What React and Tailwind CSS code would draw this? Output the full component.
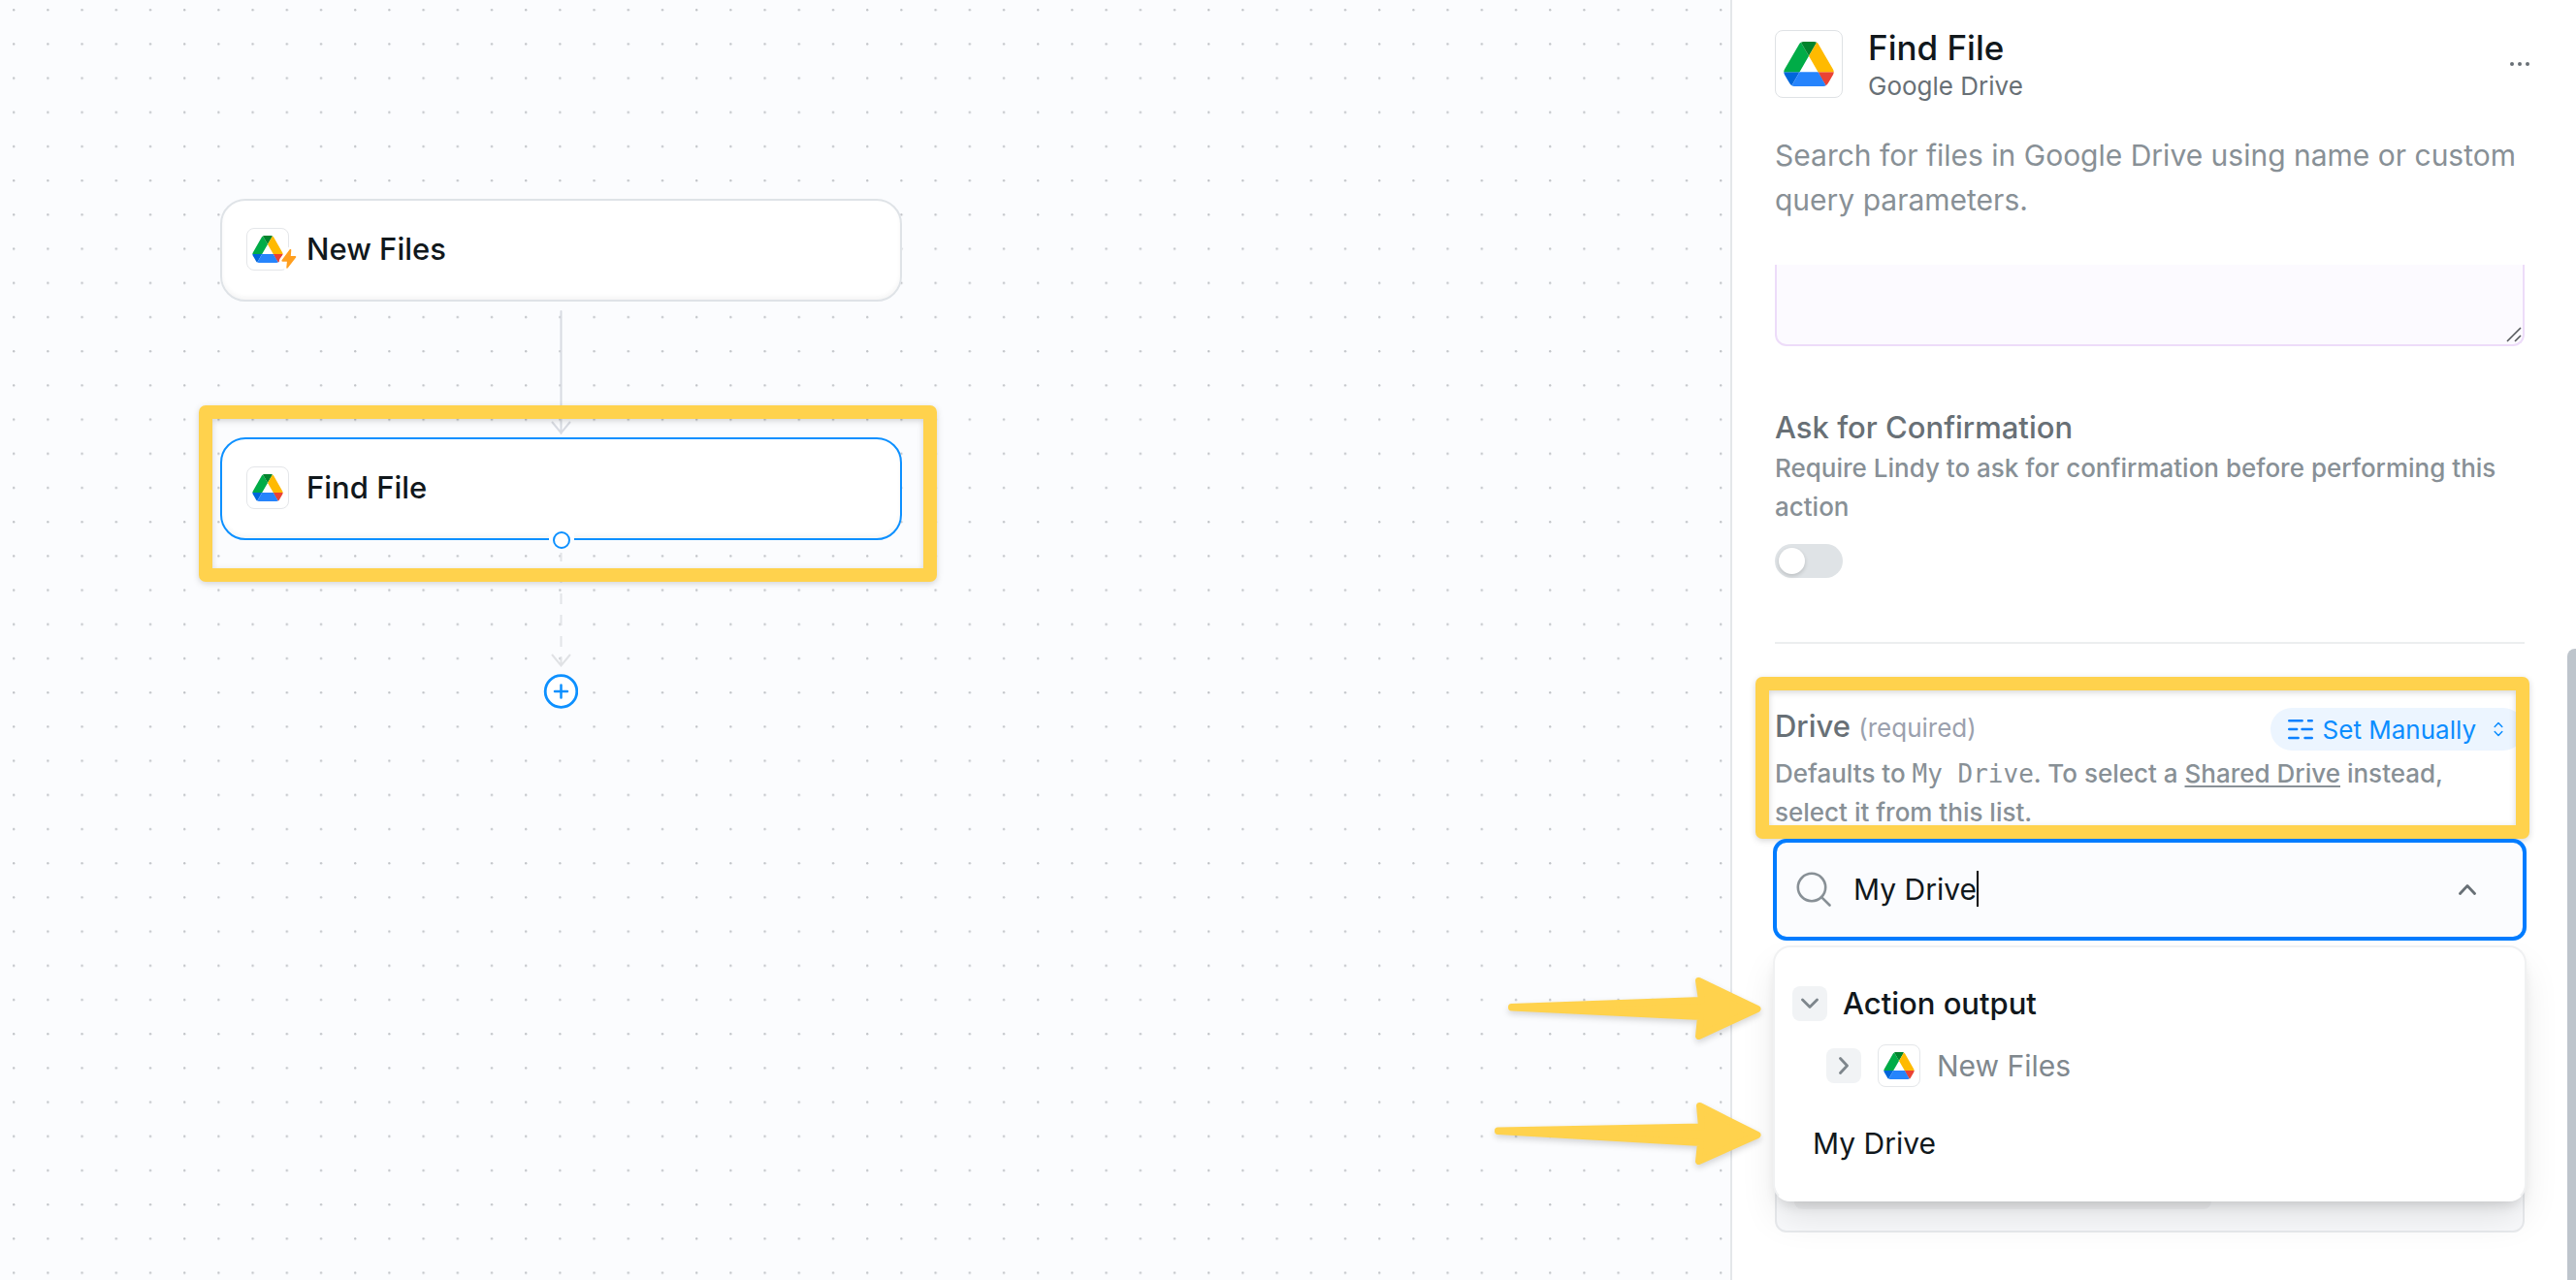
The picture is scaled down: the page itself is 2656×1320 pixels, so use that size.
import React from "react";

const ANNOTATION = "#ffd24d";

function DriveLogo({ className }) {
  return (
    <svg viewBox="0 0 87.3 78" className={className} aria-hidden="true">
      <path fill="#0066da" d="m6.6 66.85 3.85 6.65c.8 1.4 1.95 2.5 3.3 3.3l13.75-23.8h-27.5c0 1.55.4 3.1 1.2 4.5z" />
      <path fill="#00ac47" d="m43.65 25-13.75-23.8c-1.35.8-2.5 1.9-3.3 3.3l-25.4 44a9.06 9.06 0 0 0 -1.2 4.5h27.5z" />
      <path fill="#ea4335" d="m73.55 76.8c1.35-.8 2.5-1.9 3.3-3.3l1.6-2.75 7.65-13.25c.8-1.4 1.2-2.95 1.2-4.5h-27.502l5.852 11.5z" />
      <path fill="#00832d" d="m43.65 25 13.75-23.8c-1.35-.8-2.9-1.2-4.5-1.2h-18.5c-1.6 0-3.15.45-4.5 1.2z" />
      <path fill="#2684fc" d="m59.8 53h-32.3l-13.75 23.8c1.35.8 2.9 1.2 4.5 1.2h50.8c1.6 0 3.15-.45 4.5-1.2z" />
      <path fill="#ffba00" d="m73.4 26.5-12.7-22c-.8-1.4-1.95-2.5-3.3-3.3l-13.75 23.8 16.15 28h27.45c0-1.55-.4-3.1-1.2-4.5z" />
    </svg>
  );
}

function SmallDriveBadge({ children }) {
  return (
    <span className="relative flex size-11 shrink-0 items-center justify-center rounded-lg border border-[#e4e6e9] bg-white">
      <DriveLogo className="h-7 w-8" />
      {children}
    </span>
  );
}

function Bolt() {
  return (
    <svg viewBox="0 0 22 26" className="absolute -right-3 -bottom-0.5 h-[26px] w-[22px]" aria-hidden="true">
      <path
        d="M11.5 3.5 3.6 14.2c-.5.7-.1 1.5.7 1.5h4.6l-.6 6c-.1 1 .9 1.3 1.5.6l8.3-10.8c.5-.7.1-1.5-.7-1.5h-4.6l.5-6c.1-1-1.200-1.300-1.800-.5z"
        fill="#ff9f1f"
        stroke="#fff"
        strokeWidth="5"
        strokeLinejoin="round"
        paintOrder="stroke"
      />
    </svg>
  );
}

function DotGrid() {
  return (
    <svg className="absolute inset-0 size-full" aria-hidden="true">
      <defs>
        <pattern id="dots" x="13" y="9" width="35.2" height="35.2" patternUnits="userSpaceOnUse">
          <circle cx="1.2" cy="1.2" r="1.15" fill="#bfc2c6" />
        </pattern>
      </defs>
      <rect width="100%" height="100%" fill="url(#dots)" />
    </svg>
  );
}

function Canvas() {
  return (
    <main className="relative min-w-0 flex-1 bg-[#fbfcfe]">
      <DotGrid />

      <svg className="absolute top-[320px] left-[558px] h-[412px] w-[42px]" viewBox="0 0 42 412" fill="none" aria-hidden="true">
        <path d="M20.5 1V127M11.500 115.500l9 11 9-11" stroke="#d8dbe2" strokeWidth="2" strokeLinecap="round" />
        <path d="M20.500 248V356" stroke="#e2e4e7" strokeWidth="2" strokeDasharray="11 11" />
        <path d="M11.500 355.500l9 11 9-11M20.500 358v8" stroke="#e0e2e5" strokeWidth="2" strokeLinecap="round" />
      </svg>

      <div className="absolute top-[205px] left-[227px] flex h-[106px] w-[703px] items-center gap-[18px] rounded-[26px] border-2 border-[#dfe3e7] bg-white px-[25px] pb-[2px] shadow-[inset_0_-3px_4px_rgba(0,0,0,0.04)]">
        <SmallDriveBadge>
          <Bolt />
        </SmallDriveBadge>
        <span className="text-[31px] leading-[44px] font-medium text-[#11181c]">New Files</span>
      </div>

      <div className="absolute top-[451px] left-[227px] flex h-[106px] w-[703px] items-center gap-[18px] rounded-[26px] border-2 border-[#0d90ff] bg-white px-[25px] pb-[2px] shadow-[inset_0_-3px_4px_rgba(0,0,0,0.04)]">
        <SmallDriveBadge />
        <span className="text-[31px] leading-[44px] font-medium text-[#11181c]">Find File</span>
        <span className="absolute -bottom-[15px] left-1/2 flex size-[26px] -translate-x-1/2 items-center justify-center bg-[linear-gradient(#fff_50%,#fbfcfe_50%)]">
          <span className="size-[18px] rounded-full border-2 border-[#0d90ff] bg-white" />
        </span>
      </div>

      <div className="absolute top-[418px] left-[205px] h-[182px] w-[761px] rounded-[7px] border-[14px] border-[#ffd24d] drop-shadow-[0_2px_3px_rgba(0,0,0,0.16)]" />

      <button type="button" aria-label="Add step" className="absolute top-[695px] left-[560px] size-9">
        <svg viewBox="0 0 36 36" fill="none" stroke="#0d90ff" strokeLinecap="round" className="size-9">
          <circle cx="18.500" cy="18" r="16.300" strokeWidth="2.800" fill="#fff" />
          <path d="M18.500 11.500v13M12 18h13" strokeWidth="2.500" />
        </svg>
      </button>
    </main>
  );
}

function PanelHeader() {
  return (
    <header className="pr-11 pl-11">
      <div className="flex items-start gap-[26px] pt-[29px]">
        <span className="mt-[2px] flex size-[70px] items-center justify-center rounded-lg border border-[#dfe2e5] bg-white">
          <DriveLogo className="h-[46px] w-[52px]" />
        </span>
        <div className="flex-1">
          <h1 className="text-[35px] leading-10 font-medium text-[#11181c]">Find File</h1>
          <p className="text-[26px] leading-10 text-[#687076]">Google Drive</p>
        </div>
        <button type="button" aria-label="More options" className="mt-[25px] mr-1 flex h-6 w-5 items-center justify-between">
          <span className="size-1 rounded-full bg-[#687076]" />
          <span className="size-1 rounded-full bg-[#687076]" />
          <span className="size-1 rounded-full bg-[#687076]" />
        </button>
      </div>
      <p className="mt-7 text-[30px] leading-[46px] text-[#889096]">
        Search for files in Google Drive using name or custom query parameters.
      </p>
    </header>
  );
}

function Arrow({ d, className }) {
  return (
    <svg viewBox="0 0 284 80" fill={ANNOTATION} stroke={ANNOTATION} strokeWidth="7" strokeLinejoin="round" className={className} aria-hidden="true">
      <path d={d} />
    </svg>
  );
}

function Dropdown() {
  return (
    <div className="absolute top-[110px] right-0 left-0 z-10 rounded-[18px] border-2 border-[#f0f1f2] border-b-white bg-white pt-10 pr-4 pb-9 pl-[18px] shadow-[0_20px_38px_-4px_rgba(0,0,0,0.10),0_8px_14px_-6px_rgba(0,0,0,0.16)]">
      <div className="flex items-center gap-4">
        <button type="button" aria-label="Collapse action output" className="flex size-9 items-center justify-center rounded-lg bg-[#f1f3f5]">
          <svg viewBox="0 0 18 12" className="h-3 w-[18px]" fill="none" stroke="#7e868c" strokeWidth="2.800" strokeLinecap="round" strokeLinejoin="round">
            <path d="m1.500 2 7.500 7.500L16.500 2" />
          </svg>
        </button>
        <span className="text-[31px] leading-9 font-medium text-[#11181c]">Action output</span>
      </div>
      <div className="mt-6 flex items-center gap-[17px] pl-[35px]">
        <button type="button" aria-label="Expand New Files" className="flex size-9 items-center justify-center rounded-lg bg-[#f1f3f5]">
          <svg viewBox="0 0 12 18" className="h-[18px] w-3" fill="none" stroke="#7e868c" strokeWidth="2.800" strokeLinecap="round" strokeLinejoin="round">
            <path d="m2.500 1.500 7 7.500-7 7.500" />
          </svg>
        </button>
        <SmallDriveBadge />
        <span className="text-[30px] leading-[44px] text-[#80888e]">New Files</span>
      </div>
      <button type="button" className="mt-9 block pl-[21px] text-left text-[30px] leading-[44px] text-[#11181c]">
        My Drive
      </button>

      <Arrow
        className="absolute top-[22px] right-full mr-2 h-20 w-[284px] drop-shadow-[0_3px_3px_rgba(0,0,0,0.16)]"
        d="M20.500 39.500 216.500 32.500 213.500 12.500 274 41.500 213.500 69.500 215.500 49.500 20.500 39.900z"
      />
      <Arrow
        className="absolute top-[151px] right-full mr-2 h-20 w-[284px] drop-shadow-[0_3px_3px_rgba(0,0,0,0.16)]"
        d="M6.500 38 216.500 34 214.500 12.500 274 42.500 213.500 69.500 215.500 50.500 6.500 38.400z"
      />
    </div>
  );
}

function DriveField() {
  return (
    <section>
      <div className="relative mt-[66px]">
        <div className="flex items-start justify-between">
          <label htmlFor="drive" className="text-[31px] leading-[38px] font-medium text-[#687076]">
            Drive <span className="text-[26px] font-normal text-[#9ba1ae]">(required)</span>
          </label>
          <button type="button" aria-haspopup="listbox" className="flex h-11 items-center rounded-full bg-[#ecf5ff] pr-[22px] pl-[18px] text-[26px] text-[#0b8dff]">
            <svg viewBox="0 0 26 22" className="mr-2.5 h-[22px] w-[26px]" fill="none" stroke="#0b80ff" strokeWidth="2.400" strokeLinecap="round" aria-hidden="true">
              <path d="M1.200 2.200h13.500M21 2.200h3.800M1.200 11h8M14.500 11h10.300M1.200 20h9.500M17.500 20h7.300" />
            </svg>
            Set Manually
            <svg viewBox="0 0 10 16" className="ml-[18px] h-4 w-2.5" fill="none" stroke="#0b8dff" strokeWidth="1.500" strokeLinecap="round" strokeLinejoin="round" aria-hidden="true">
              <path d="m1.200 5.500 3.800-4 3.800 4M1.200 10.500l3.800 4 3.800-4" />
            </svg>
          </button>
        </div>
        <p className="mt-1 pr-10 text-[26px] leading-10 font-medium text-[#889096]">
          Defaults to <code className="font-['DejaVu_Sans_Mono',monospace] leading-none font-normal">My Drive</code>. To select a{" "}
          <a href="#shared" className="underline decoration-2 underline-offset-[3px]">Shared Drive</a> instead, select it from this list.
        </p>
        <div className="pointer-events-none absolute -top-8 -right-[5px] -bottom-[7px] -left-5 rounded-[7px] border-[14px] border-[#ffd24d] drop-shadow-[0_2px_3px_rgba(0,0,0,0.16)]" />
      </div>

      <div className="relative -mx-[2px] mt-[7px]">
        <div className="flex h-[105px] items-center rounded-[14px] border-4 border-[#007cff] bg-[#fbfcfe] pr-12 pb-[2px] pl-5">
          <svg viewBox="0 0 36 36" className="mr-[23px] size-9" fill="none" stroke="#889096" strokeWidth="2.600" strokeLinecap="round" aria-hidden="true">
            <circle cx="16" cy="16" r="14.200" />
            <path d="m26.300 26.300 8.200 8.200" />
          </svg>
          <input id="drive" type="text" defaultValue="My Drive" className="field-sizing-content bg-transparent text-[30px] leading-[44px] text-[#11181c] outline-none" />
          <span className="h-[37px] w-[2px] bg-black" />
          <svg viewBox="0 0 18 12" className="ml-auto h-3 w-[18px]" fill="none" stroke="#687076" strokeWidth="2.800" strokeLinecap="round" strokeLinejoin="round" aria-hidden="true">
            <path d="m1.500 10.500 7.500-8 7.500 8" />
          </svg>
        </div>
        <Dropdown />
      </div>

      <div className="mt-8 h-[269px] rounded-xl border-2 border-[#e8eaed] bg-[#f9fafc] px-[18px] pt-8">
        <div className="h-[211px] w-[430px] rounded-lg bg-[#f1f2f4]" />
      </div>
    </section>
  );
}

function Panel() {
  return (
    <aside className="relative w-[872px] max-w-full shrink-0 border-l-2 border-[#e4e7ea] bg-white">
      <PanelHeader />
      <div className="mt-11 pr-[53px] pl-11">
        <div className="relative">
          <textarea aria-label="Instructions" className="block h-[84px] w-full resize-none rounded-b-xl border-2 border-t-0 border-[#eddcf9] bg-[#fcfaff] outline-none" />
          <svg viewBox="0 0 16 16" className="absolute right-[3px] bottom-1 size-4" stroke="#55585c" strokeWidth="1.600" aria-hidden="true">
            <path d="M1 15 15 1M9 15l6-6" />
          </svg>
        </div>

        <section className="mt-[62px]">
          <label htmlFor="confirm" className="block text-[31px] leading-[44px] font-medium text-[#687076]">
            Ask for Confirmation
          </label>
          <p className="text-[26px] leading-10 font-medium text-[#889096]">
            Require Lindy to ask for confirmation before performing this action
          </p>
          <input
            id="confirm"
            type="checkbox"
            role="switch"
            className="mt-[18px] block h-[35px] w-[70px] appearance-none rounded-full bg-[#dfe3e6] p-1 before:block before:size-[27px] before:rounded-full before:bg-white before:shadow-[0_2px_4px_rgba(0,0,0,0.16)]"
          />
        </section>

        <hr className="mt-[66px] border-t-2 border-[#eceeef]" />
        <DriveField />
      </div>
      <div className="absolute top-[669px] right-0 bottom-0 w-[9px] rounded-tl-lg bg-[#bec5cc]" />
    </aside>
  );
}

export default function App() {
  return (
    <div className="flex h-screen overflow-hidden bg-white font-['Inter',sans-serif] antialiased">
      <Canvas />
      <Panel />
    </div>
  );
}
